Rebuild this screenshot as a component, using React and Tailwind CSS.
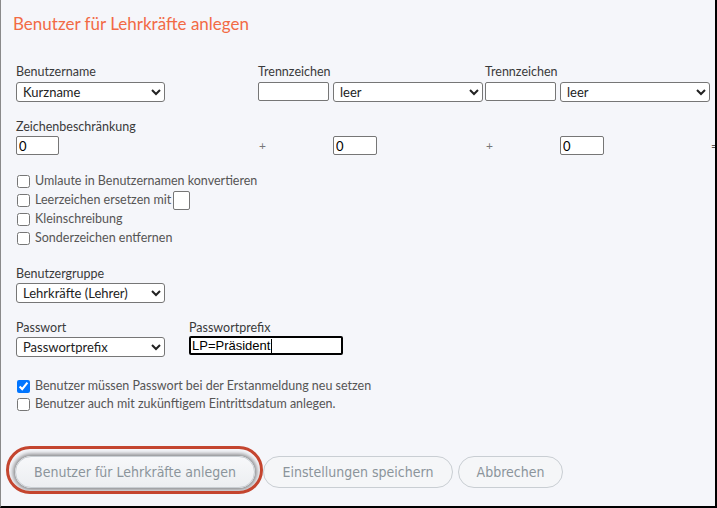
import React from 'react';

const label = "block h-[16px] leading-[16px] text-[12.5px] text-[#3a3a3a] whitespace-nowrap";
const selectCls = "block h-[20px] rounded-[3px] border border-[#767676] bg-white pl-[2px] text-[13px] leading-[18px] text-[#222]";
const inputCls = "block h-[19px] rounded-[2px] border border-[#767676] bg-white px-[2px] text-[13px] leading-[17px] text-black";

function Check({ checked, children, className = '' }) {
  return (
    <label className={`flex items-center gap-[5px] ${className}`}>
      <input type="checkbox" defaultChecked={checked} className="ml-[1px] h-[13px] w-[13px] shrink-0" />
      <span className="text-[12.5px] text-[#555] whitespace-nowrap">{children}</span>
    </label>
  );
}

export default function App() {
  return (
    <div
      className="h-[508px] w-[717px] overflow-hidden border-l border-r-2 border-b-2 border-l-[#8a8a8a] border-r-black border-b-black bg-[#f5f6fa]"
      style={{ fontFamily: 'Lato, "Open Sans", sans-serif' }}
    >
      <h1 className="pl-[12px] pt-[12px] text-[17px] leading-[24px] text-[#f26a45]">
        Benutzer für Lehrkräfte anlegen
      </h1>

      <div className="mt-[28px] grid grid-cols-[242px_75px_152px_75px_151px_auto] pl-[15px]">
        <span className={label}>Benutzername</span>
        <span className={`${label} col-span-2`}>Trennzeichen</span>
        <span className={`${label} col-span-3`}>Trennzeichen</span>

        <select className={`${selectCls} mt-[2px] w-[149px]`} defaultValue="Kurzname">
          <option>Kurzname</option>
        </select>
        <input className={`${inputCls} mt-[2px] w-[71px]`} defaultValue="" />
        <select className={`${selectCls} mt-[2px] w-[150px]`} defaultValue="leer">
          <option>leer</option>
        </select>
        <input className={`${inputCls} mt-[2px] w-[71px]`} defaultValue="" />
        <select className={`${selectCls} mt-[2px] w-[150px]`} defaultValue="leer">
          <option>leer</option>
        </select>
        <span />

        <span className={`${label} col-span-6 mt-[17px]`}>Zeichenbeschränkung</span>

        <input className={`${inputCls} mt-[1px] w-[43px]`} defaultValue="0" />
        <span className="mt-[1px] pl-[1px] text-[12px] leading-[19px] text-[#777]">+</span>
        <input className={`${inputCls} mt-[1px] w-[44px]`} defaultValue="0" />
        <span className="mt-[1px] pl-[1px] text-[12px] leading-[19px] text-[#777]">+</span>
        <input className={`${inputCls} mt-[1px] w-[44px]`} defaultValue="0" />
        <span className="mt-[1px] text-[12px] leading-[19px] text-[#555]">=</span>
      </div>

      <div className="mt-[17px] flex flex-col pl-[15px]">
        <Check className="h-[19px]">Umlaute in Benutzernamen konvertieren</Check>
        <div className="flex h-[19px] items-center">
          <Check>Leerzeichen ersetzen mit</Check>
          <input className="ml-[2px] h-[19px] w-[17px] rounded-[2px] border border-[#767676] bg-white" defaultValue="" />
        </div>
        <Check className="h-[19px]">Kleinschreibung</Check>
        <Check className="h-[19px]">Sonderzeichen entfernen</Check>
      </div>

      <div className="mt-[18px] pl-[15px]">
        <span className={label}>Benutzergruppe</span>
        <select className={`${selectCls} mt-[1px] w-[149px]`} defaultValue="Lehrkräfte (Lehrer)">
          <option>Lehrkräfte (Lehrer)</option>
        </select>
      </div>

      <div className="mt-[17px] flex gap-[24px] pl-[15px]">
        <div>
          <span className={label}>Passwort</span>
          <select className={`${selectCls} mt-[1px] w-[149px]`} defaultValue="Passwortprefix">
            <option>Passwortprefix</option>
          </select>
        </div>
        <div>
          <span className={label}>Passwortprefix</span>
          <div
            className="flex h-[19px] w-[154px] items-center rounded-[2px] border-2 border-black bg-white pl-[1px] text-[13px] text-black"
            style={{ fontFamily: '"Liberation Sans", Arial, sans-serif' }}
          >
            <span>LP=Präsident</span>
            <span className="ml-[1px] h-[14px] w-[1px] bg-black" />
          </div>
        </div>
      </div>

      <div className="mt-[20px] flex flex-col pl-[15px]">
        <Check className="h-[18px]" checked>Benutzer müssen Passwort bei der Erstanmeldung neu setzen</Check>
        <Check className="h-[18px]">Benutzer auch mit zukünftigem Eintrittsdatum anlegen.</Check>
      </div>

      <div
        className="mt-[43px] flex items-center pl-[14px]"
        style={{ fontFamily: '"Liberation Sans Narrow", "DejaVu Sans Condensed", sans-serif' }}
      >
        <span className="relative">
          <button className="h-[32px] w-[240px] rounded-full border border-[#c9ced3] bg-gradient-to-b from-[#f7f8fa] to-[#eceef1] text-[14px] text-[#8b949b] shadow-[0_0_4px_2px_rgba(0,0,0,0.45)]">
            Benutzer für Lehrkräfte anlegen
          </button>
          <span className="pointer-events-none absolute -left-[9px] -right-[8px] -top-[10px] -bottom-[6px] rounded-full border-[3px] border-[#c4452f]" />
        </span>
        <button className="ml-[8px] h-[32px] w-[190px] rounded-full border border-[#c9ced3] bg-[#f5f6f8] text-[14px] text-[#8b949b]">
          Einstellungen speichern
        </button>
        <button className="ml-[5px] h-[32px] w-[105px] rounded-full border border-[#c9ced3] bg-[#f5f6f8] text-[14px] text-[#8b949b]">
          Abbrechen
        </button>
      </div>
    </div>
  );
}
